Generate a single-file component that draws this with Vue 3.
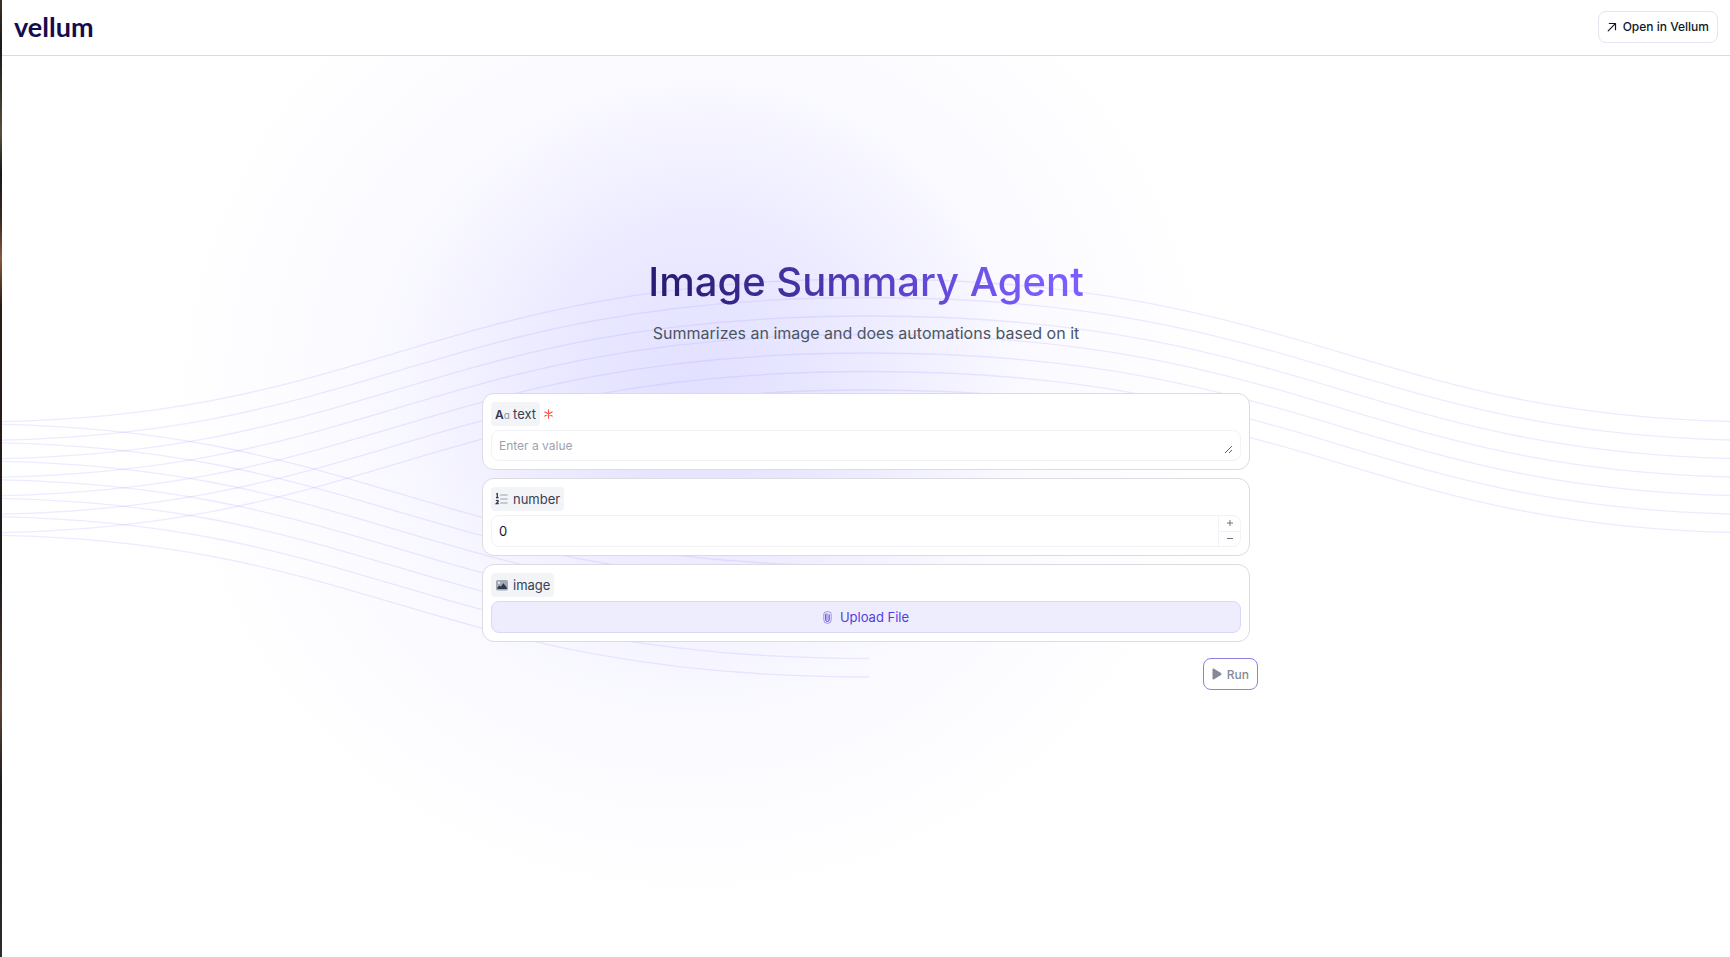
<template>
  <div class="page">
    <div class="edge"></div>
    <div class="app">
      <header class="topbar">
        <a href="#" class="logo">vellum</a>
        <a href="#" class="open-link">
          <svg width="10" height="10" viewBox="0 0 10 10" fill="none" stroke="currentColor" stroke-width="1.2" stroke-linecap="round" stroke-linejoin="round">
            <path d="M1.2 8.8 8.3 1.7M2.3 1.5h6.2v6.2" />
          </svg>
          Open in Vellum
        </a>
      </header>

      <main class="content">
        <div class="glow"></div>
        <svg class="waves" viewBox="0 0 1728 901" preserveAspectRatio="xMidYMin slice" fill="none">
          <path v-for="(d, i) in waves" :key="i" :d="d" />
        </svg>

        <form class="form" @submit.prevent>
          <h1>Image Summary Agent</h1>
          <p class="subtitle">Summarizes an image and does automations based on it</p>

          <div class="card">
            <div class="card-label">
              <label for="text" class="pill">
                <span class="case-icon" aria-hidden="true">A<span>a</span></span>
                text
              </label>
              <svg class="required" width="9" height="10" viewBox="0 0 9 10" stroke="currentColor" stroke-width="1.2" stroke-linecap="round">
                <path d="M4.5 .8v8.4M.9 2.9l7.2 4.2M8.1 2.9.9 7.1" />
              </svg>
            </div>
            <div class="field text-field">
              <textarea id="text" v-model="text" rows="1" placeholder="Enter a value"></textarea>
            </div>
          </div>

          <div class="card">
            <div class="card-label">
              <label for="number" class="pill">
                <svg width="14" height="14" viewBox="0 0 14 14" fill="none">
                  <path d="M5.6 3h6.6M5.6 7h6.6M5.6 11h6.6" stroke="#9aa1ae" stroke-width="1.2" stroke-linecap="round" />
                  <path d="M1.2 2l1.1-.4v4M1 5.6h2.6M1.1 8.9c.5-.9 2.3-.7 2.2.3 0 .8-1.3 1.5-2.1 2.5h2.5" stroke="#2f3a4e" stroke-width="1.3" />
                </svg>
                number
              </label>
            </div>
            <div class="field number-field">
              <input id="number" v-model="number" type="text" inputmode="numeric">
              <div class="stepper">
                <button type="button" aria-label="Increase" @click="number++">
                  <svg width="8" height="8" viewBox="0 0 8 8" stroke="currentColor"><path d="M1 4h6M4 1v6" /></svg>
                </button>
                <button type="button" aria-label="Decrease" @click="number--">
                  <svg width="8" height="8" viewBox="0 0 8 8" stroke="currentColor"><path d="M1 3.5h6" /></svg>
                </button>
              </div>
            </div>
          </div>

          <div class="card">
            <div class="card-label">
              <span class="pill">
                <svg width="14" height="14" viewBox="0 0 14 14">
                  <rect x="1" y="2" width="12" height="10.4" rx="1.6" fill="#a3a9b5" />
                  <circle cx="4" cy="4.8" r="1.1" fill="#f3f4f6" />
                  <path d="M2.4 11V9.6l2-2 1.3 1.2 2.7-3.6 3.4 4.4V11z" fill="#2f3a4e" />
                </svg>
                image
              </span>
            </div>
            <button type="button" class="upload">
              <svg width="9" height="13" viewBox="0 0 9 13" fill="none" stroke="currentColor" stroke-linecap="round">
                <path d="M6.2 3.8v5a1.7 1.7 0 0 1-3.4 0V3.6" />
                <path d="M2.8 8.8V3.6a1 1 0 0 1 2 0v5M.8 4v4.8a3.7 3.6 0 0 0 7.4 0V3.4A2.7 2.7 0 0 0 5.5.7h-2A2.7 2.7 0 0 0 .8 3.4z" opacity=".5" />
              </svg>
              Upload File
            </button>
          </div>

          <div class="actions">
            <button type="submit" class="run">
              <svg width="10" height="12" viewBox="0 0 10 12" fill="#858a96">
                <path d="M.5 1.6c0-.9.9-1.3 1.6-.9l6.9 4.4c.7.4.7 1.4 0 1.8l-6.9 4.4c-.7.4-1.6 0-1.6-.9z" />
              </svg>
              Run
            </button>
          </div>
        </form>
      </main>
    </div>
  </div>
</template>

<script setup>
import { ref } from 'vue';

const text = ref('');
const number = ref(0);

const lineGap = 18.5;
const waves = [];

for (let i = 0; i < 7; i++) {
  const top = 366 + i * lineGap;
  const crest = top - 143;
  waves.push(`M-33 ${top}C367 ${top} 427 ${crest} 867 ${crest}S1367 ${top} 1767 ${top}`);

  // the lower set only runs to the middle of the page
  const start = top + 2;
  const trough = start + 142;
  waves.push(`M-33 ${start}C367 ${start} 427 ${trough} 867 ${trough}`);
}
</script>

<style>
body {
  margin: 0;
}
</style>

<style scoped>
.page {
  display: flex;
  min-height: 100vh;
  font-family: Inter, "Liberation Sans", sans-serif;
  font-size: 13px;
  color: #111827;
}

.edge {
  width: 2px;
  background: linear-gradient(#3b3128 0, #18191a 5%, #57503a 14%, #17191b 18%, #3a2a20 23%, #8a5a3c 27%, #2a1a15 32%, #1c1b1c 60%, #5b4030 74%, #1d1d1f 82%, #2c2c2e 100%);
}

.app {
  flex: 1;
  min-width: 0;
  display: flex;
  flex-direction: column;
}

.topbar {
  display: flex;
  align-items: center;
  justify-content: space-between;
  box-sizing: border-box;
  height: 56px;
  padding: 0 12px 2px;
  border-bottom: 1px solid #dcdce0;
  background: #fff;
}

.logo {
  font-family: Lato, sans-serif;
  font-size: 27px;
  font-weight: 700;
  line-height: 32px;
  color: #140c4d;
  text-decoration: none;
}

.open-link {
  display: flex;
  align-items: center;
  gap: 6px;
  box-sizing: border-box;
  height: 32px;
  padding: 0 8px;
  border: 1px solid #e4e4f4;
  border-radius: 8px;
  font-size: 12px;
  font-weight: 500;
  color: #111827;
  text-decoration: none;
}

.content {
  position: relative;
  flex: 1;
  overflow: hidden;
  padding: 0 24px;
}

.glow,
.waves {
  position: absolute;
  inset: 0;
  width: 100%;
  height: 100%;
}

.glow {
  background:
    radial-gradient(ellipse 300px 300px at 41% 36%, rgba(196, 192, 255, 0.24), rgba(196, 192, 255, 0.16) 45%, transparent),
    radial-gradient(ellipse 530px 510px at 40% 38%, rgba(214, 212, 255, 0.5), rgba(222, 220, 255, 0.34) 38%, rgba(240, 239, 255, 0.24) 70%, transparent);
}

.waves path {
  stroke: #8d83ff;
  stroke-opacity: 0.16;
  stroke-width: 1.3;
}

.form {
  position: relative;
  max-width: 768px;
  margin: 0 auto;
  padding-top: 200px;
}

h1 {
  width: fit-content;
  margin: 0 auto;
  font-size: 40px;
  line-height: 52px;
  font-weight: 500;
  background: linear-gradient(70deg, #2a1c74 8%, #7c5cff 88%);
  background-clip: text;
  -webkit-background-clip: text;
  color: transparent;
}

.subtitle {
  margin: 12px 0 47px;
  font-size: 16px;
  line-height: 26px;
  text-align: center;
  color: #4b5563;
}

.card {
  margin-bottom: 8px;
  padding: 8px;
  border: 1px solid #dcdce0;
  border-radius: 12px;
  background: #fff;
}

.card-label {
  display: flex;
  align-items: center;
  gap: 4px;
  margin-bottom: 4px;
}

.pill {
  display: flex;
  align-items: center;
  gap: 4px;
  height: 24px;
  padding: 0 4px;
  border-radius: 4px;
  background: #f3f4f8;
  color: #374151;
}

.case-icon {
  width: 14px;
  font-size: 12px;
  font-weight: 600;
  color: #2f3a4e;
  font-feature-settings: "cv11";
}

.case-icon span {
  font-size: 10px;
  font-weight: 400;
  color: #8f96a4;
}

.required {
  color: #f8554c;
}

.field {
  box-sizing: border-box;
  height: 32px;
  border: 1px solid #f3f3f7;
  border-radius: 8px;
}

.text-field {
  display: flex;
  height: 31px;
  padding: 6px 7px;
}

textarea,
input {
  padding: 0;
  border: 0;
  outline: 0;
  background: transparent;
  font: inherit;
  color: #111827;
}

textarea {
  flex: 1;
  height: 17px;
  font-size: 12px;
  line-height: 17px;
  resize: vertical;
}

textarea::placeholder {
  color: #9ca3af;
}

.number-field {
  display: flex;
}

.number-field input {
  flex: 1;
  min-width: 0;
  padding-left: 7px;
}

.stepper {
  display: flex;
  flex-direction: column;
  width: 21px;
  border-left: 1px solid #f3f3f7;
}

.stepper button {
  flex: 1;
  display: flex;
  align-items: center;
  justify-content: center;
  padding: 0;
  border: 0;
  background: none;
  color: #6b7280;
}

.stepper button + button {
  border-top: 1px solid #f3f3f7;
}

button {
  font-family: inherit;
  cursor: pointer;
}

.upload {
  display: flex;
  align-items: center;
  justify-content: center;
  gap: 8px;
  width: 100%;
  height: 32px;
  border: 1px solid #d9d7fb;
  border-radius: 8px;
  background: #eeedfd;
  font-size: 13px;
  color: #4f3fe0;
}

.actions {
  display: flex;
  justify-content: flex-end;
  margin: 16px -8px 0 0;
}

.run {
  display: flex;
  align-items: center;
  gap: 5px;
  height: 32px;
  padding: 0 8px;
  border: 1px solid #8f7fe0;
  border-radius: 8px;
  background: #fff;
  font-size: 12px;
  font-weight: 500;
  color: #858a96;
}
</style>
